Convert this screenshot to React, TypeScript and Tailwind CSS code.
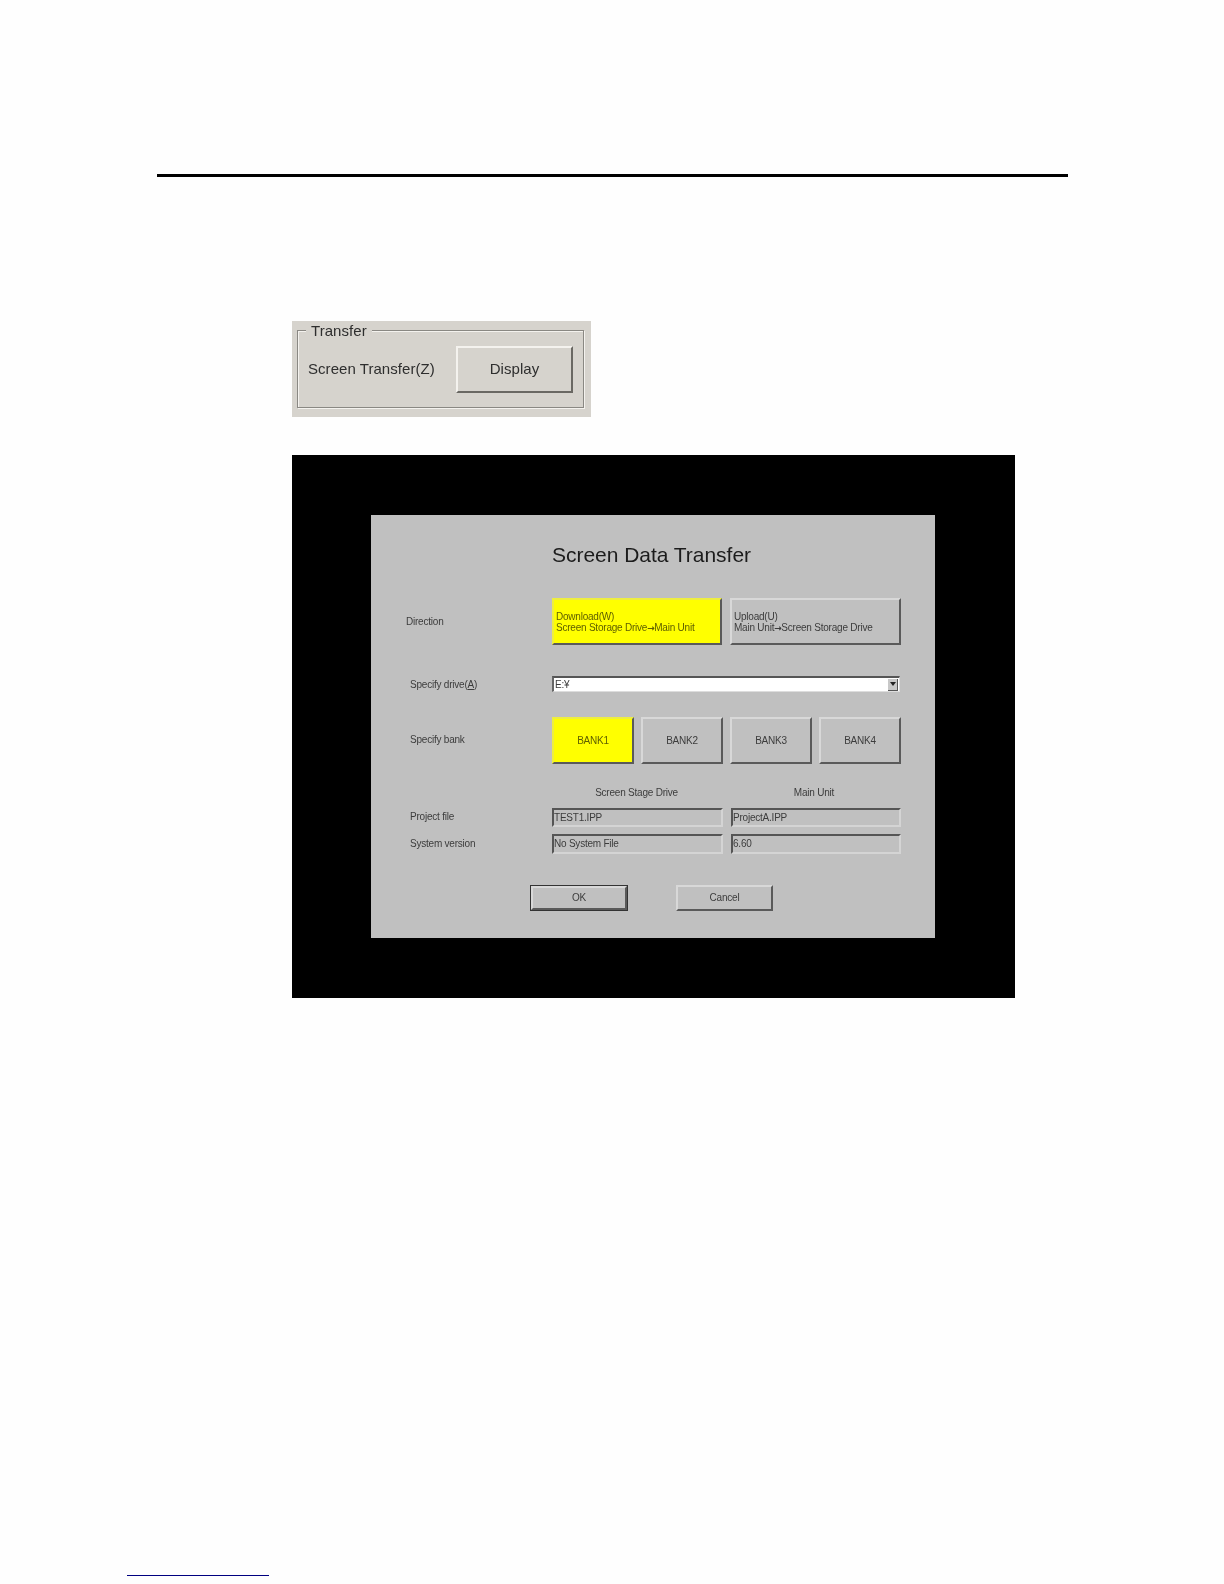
const sans = "font-['Liberation_Sans',Arial,sans-serif]";
const raised = "border-2 border-t-[#d8d8d8] border-l-[#d8d8d8] border-b-[#5a5a5a] border-r-[#5a5a5a]";
const label = "text-[10px] leading-none tracking-[-0.22px] text-[#3c3c3c] whitespace-nowrap";
const panelText = "text-[15px] tracking-[0.05px] text-[#2e2e2e] blur-[0.3px] whitespace-nowrap";

function Arrow() {
  return <span className="font-['DejaVu_Sans',sans-serif] font-bold text-[9px] tracking-[-0.5px]">→</span>;
}

function BankButton({ name, active }: { name: string; active?: boolean }) {
  return (
    <div className={`w-[82px] h-[47px] flex items-center justify-center ${raised} ${active ? "bg-[#ffff00] border-t-[#eeee40] border-l-[#eeee40]" : "bg-[#c0c0c0]"}`}>
      <span className={`${label} ${active ? "text-[#5f5f00]" : ""}`}>{name}</span>
    </div>
  );
}

function Field({ value, w }: { value: string; w: string }) {
  return (
    <div className={`${w} h-full flex items-center border-2 border-t-[#555] border-l-[#555] border-b-[#d4d4d4] border-r-[#d4d4d4] bg-[#c0c0c0]`}>
      <span className={label}>{value}</span>
    </div>
  );
}

function DataRow({ name, a, b, className }: { name: string; a: string; b: string; className: string }) {
  return (
    <div className={`flex items-center ${className}`}>
      <span className={`w-[142px] -mt-[1px] ${label}`}>{name}</span>
      <div className="flex gap-[8px] h-full">
        <Field value={a} w="w-[171px]" />
        <Field value={b} w="w-[170px]" />
      </div>
    </div>
  );
}

export default function App() {
  return (
    <div className={`w-[1224px] h-[1584px] bg-[#fefefe] flex flex-col overflow-hidden ${sans}`}>
      <div className="mt-[174px] ml-[157px] w-[911px] h-[3px] bg-black shrink-0" />

      {/* Transfer panel */}
      <div className="mt-[144px] ml-[292px] w-[299px] h-[96px] bg-[#d6d3cd] pt-[9px] pl-[5px] pr-[7px] shrink-0">
        <div className="relative h-[78px] border border-[#8a8883] shadow-[inset_1px_1px_0_#f4f2ee,1px_1px_0_#f4f2ee] flex items-start pt-[15px] pl-[10px] pr-[10px] justify-between">
          <span className={`absolute left-[8px] -top-[7px] bg-[#d6d3cd] px-[5px] leading-[14px] ${panelText}`}>Transfer</span>
          <span className={`leading-[46px] ${panelText}`}>Screen Transfer(Z)</span>
          <div className="w-[117px] h-[47px] flex items-center justify-center bg-[#d6d3cd] border-2 border-t-[#f4f2ee] border-l-[#f4f2ee] border-b-[#6a6863] border-r-[#6a6863]">
            <span className={panelText}>Display</span>
          </div>
        </div>
      </div>

      {/* Black panel */}
      <div className="mt-[38px] ml-[292px] w-[723px] h-[543px] bg-black pt-[60px] pl-[79px] shrink-0">
        <div className="w-[564px] h-[423px] bg-[#c0c0c0] pl-[39px] flex flex-col blur-[0.4px]">
          <div className="mt-[28px] ml-[142px] h-[24px] flex items-center text-[21px] tracking-[-0.03px] text-[#1c1c1c] whitespace-nowrap">Screen Data Transfer</div>

          <div className="mt-[31px] h-[47px] flex items-center">
            <span className={`w-[142px] -ml-[4px] mt-[1px] ${label}`}>Direction</span>
            <div className="flex gap-[8px] h-full ml-[4px]">
              <div className={`w-[170px] h-full flex flex-col justify-center gap-[1px] pl-[2px] pt-[1px] bg-[#ffff00] ${raised} border-t-[#eeee40] border-l-[#eeee40]`}>
                <span className={`${label} text-[#5f5f00]`}>Download(W)</span>
                <span className={`${label} text-[#5f5f00]`}>Screen Storage Drive<Arrow />Main Unit</span>
              </div>
              <div className={`w-[171px] h-full flex flex-col justify-center gap-[1px] pl-[2px] pt-[1px] bg-[#c0c0c0] ${raised}`}>
                <span className={label}>Upload(U)</span>
                <span className={label}>Main Unit<Arrow />Screen Storage Drive</span>
              </div>
            </div>
          </div>

          <div className="mt-[31px] h-[16px] flex items-center">
            <span className={`w-[142px] mt-[2px] ${label}`}>Specify drive(<span className="underline">A</span>)</span>
            <div className="w-[348px] h-full bg-white border-t-2 border-l-2 border-t-[#555] border-l-[#666] border-b border-r border-b-[#ddd] border-r-[#ddd] flex items-center justify-between pr-[1px]">
              <span className={`${label} pl-[1px]`}>E:¥</span>
              <span className="w-[10px] h-[12px] bg-[#c8c8c8] border-r border-b border-[#555] flex items-center justify-center">
                <svg width="6" height="4" viewBox="0 0 6 4"><path d="M0 0h6L3 4z" fill="#222" /></svg>
              </span>
            </div>
          </div>

          <div className="mt-[25px] h-[47px] flex items-center">
            <span className={`w-[142px] -mt-[2px] ${label}`}>Specify bank</span>
            <div className="flex gap-[7px]">
              <BankButton name="BANK1" active />
              <BankButton name="BANK2" />
              <BankButton name="BANK3" />
              <BankButton name="BANK4" />
            </div>
          </div>

          <div className="mt-[22px] h-[14px] ml-[142px] flex gap-[8px] items-center">
            <span className={`w-[169px] text-center ${label} tracking-[-0.12px]`}>Screen Stage Drive</span>
            <span className={`w-[170px] text-center ${label} tracking-[-0.12px]`}>Main Unit</span>
          </div>

          <DataRow name="Project file" a="TEST1.IPP" b="ProjectA.IPP" className="mt-[8px] h-[19px]" />
          <DataRow name="System version" a="No System File" b="6.60" className="mt-[7px] h-[20px]" />

          <div className="mt-[31px] ml-[120px] flex gap-[48px]">
            <div className="w-[98px] h-[26px] border border-[#333] bg-[#c0c0c0]">
              <div className={`w-full h-full flex items-center justify-center ${raised}`}>
                <span className={label}>OK</span>
              </div>
            </div>
            <div className={`w-[97px] h-[26px] flex items-center justify-center bg-[#c0c0c0] ${raised}`}>
              <span className={label}>Cancel</span>
            </div>
          </div>
        </div>
      </div>

      <div className="mt-auto mb-[8px] ml-[127px] w-[142px] h-[1px] bg-[#000080] shrink-0" />
    </div>
  );
}
